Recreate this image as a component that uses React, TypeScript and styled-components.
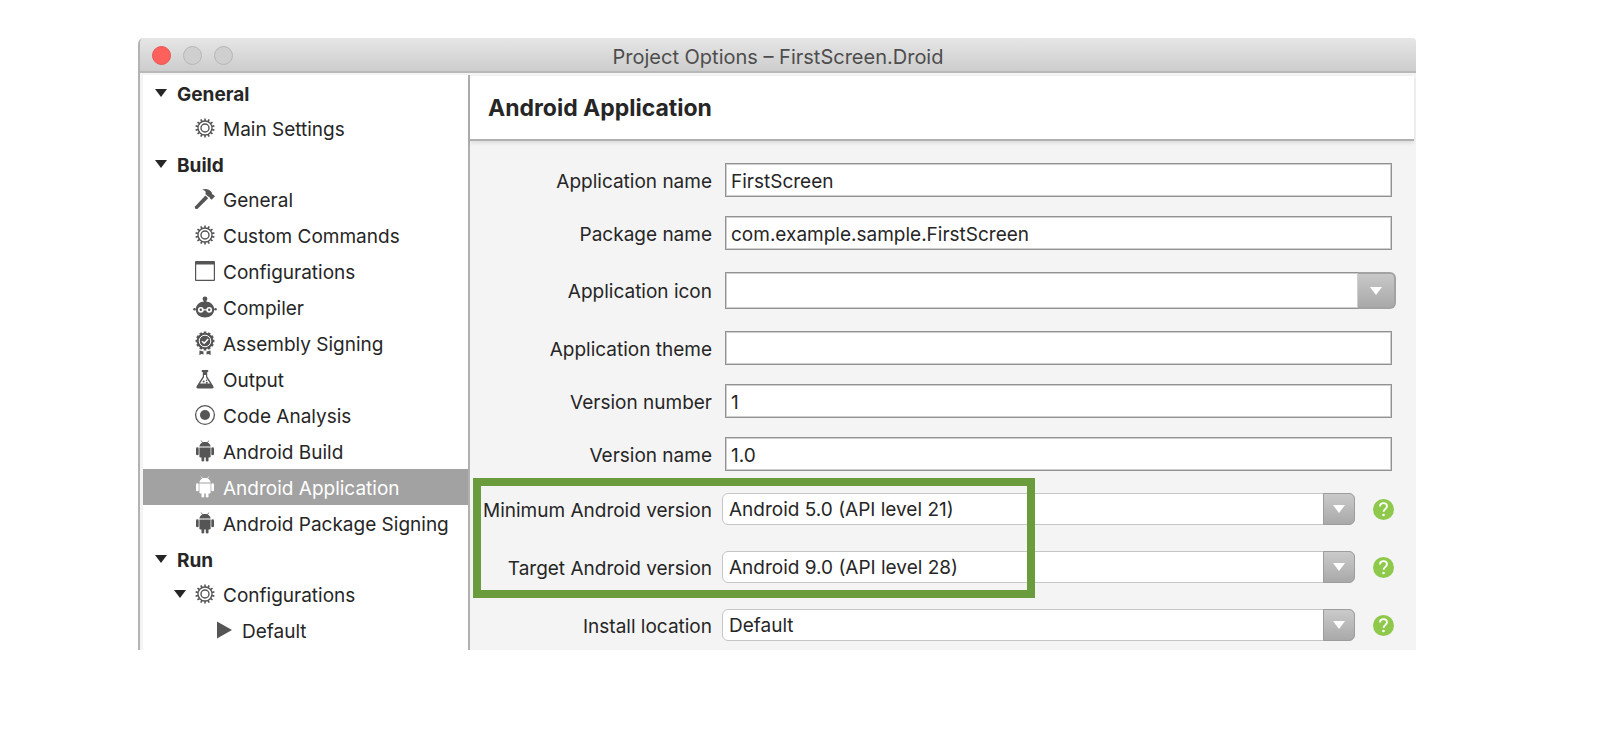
import React from 'react';
import styled, { createGlobalStyle, css } from 'styled-components';

const Global = createGlobalStyle`
  * { box-sizing: border-box; }
  body {
    margin: 0;
    background: #fff;
    color: #262626;
    font-family: Inter, "Liberation Sans", sans-serif;
    font-size: 19px;
    line-height: 24px;
  }
`;

const Page = styled.main`
  padding: 38px 184px 38px 138px;
`;

const Window = styled.section`
  overflow: hidden;
  border-left: 2px solid #b3b3b3;
  border-top-left-radius: 6px;
  border-top-right-radius: 4px;
  background: #f4f4f4;
`;

const TitleBar = styled.header`
  position: relative;
  display: flex;
  align-items: center;
  justify-content: center;
  height: 35px;
  padding-top: 2px;
  border-bottom: 2px solid #b8b8b8;
  background: linear-gradient(#e6e6e6, #cdcdcd);
`;

const Title = styled.h1`
  margin: 0;
  padding-top: 2px;
  color: #4d4d4d;
  font-size: 20px;
  font-weight: 400;
`;

const Lights = styled.div`
  position: absolute;
  left: 12px;
  display: flex;
  gap: 12px;
`;

const Light = styled.button<{ $close?: boolean }>`
  width: 19px;
  height: 19px;
  padding: 0;
  border: 1px solid ${(p) => (p.$close ? '#e9544f' : '#b7b7b7')};
  border-radius: 50%;
  background: ${(p) => (p.$close ? '#fe605c' : '#cfcfcf')};
`;

const Body = styled.div`
  display: grid;
  grid-template-columns: 330px minmax(0, 1fr);
  padding-top: 3px;
`;

const Sidebar = styled.nav`
  margin-left: 3px;
  margin-top: -1px;
  padding-bottom: 2px;
  border-right: 2px solid #b0b0b0;
  background: #fff;
`;

const GroupRow = styled.button`
  display: flex;
  align-items: center;
  gap: 10px;
  width: 100%;
  height: 35px;
  padding: 0 0 0 12px;
  border: 0;
  background: none;
  color: inherit;
  font: inherit;
  font-weight: 700;
`;

const ItemRow = styled.a<{ $depth?: number; $selected?: boolean }>`
  display: flex;
  align-items: center;
  gap: 6px;
  height: 36px;
  padding-left: ${(p) => (p.$depth === 2 ? 69 : 31)}px;
  background: ${(p) => (p.$selected ? '#a2a2a2' : 'transparent')};
  color: ${(p) => (p.$selected ? '#fff' : '#262626')};
  text-decoration: none;
  white-space: nowrap;
`;

const Caption = styled.span`
  padding-top: 4px;
`;

const Twisty = styled.span`
  display: flex;
  width: 13px;
`;

const Glyph = styled.svg<{ $selected?: boolean }>`
  flex: none;
  width: 24px;
  height: 24px;
  color: ${(p) => (p.$selected ? '#fff' : '#555')};
`;

const Pane = styled.section`
  min-width: 0;
`;

const PaneHeader = styled.header`
  margin-right: 2px;
  padding: 19px 18px 18px;
  border-bottom: 2px solid #b0b0b0;
  background: #fff;
  box-shadow: 0 2px 4px rgba(0, 0, 0, 0.1);
`;

const PaneTitle = styled.h2`
  margin: 0;
  font-size: 23px;
  line-height: 26px;
  font-weight: 700;
`;

const Form = styled.form`
  display: flex;
  flex-direction: column;
  gap: 22px;
  padding: 22px 20px 9px 0;
`;

const FieldGroup = styled.div<{ $gap: number }>`
  position: relative;
  display: flex;
  flex-direction: column;
  gap: ${(p) => p.$gap}px;
`;

const Field = styled.div<{ $kind?: 'text' | 'combo' | 'select' }>`
  display: grid;
  grid-template-columns: 242px minmax(0, 1fr) auto;
  align-items: center;
  column-gap: ${(p) => (p.$kind === 'select' ? 10 : 13)}px;
  padding-right: ${(p) => (p.$kind === 'combo' ? 0 : p.$kind === 'select' ? 2 : 4)}px;
  ${(p) => p.$kind !== 'select' && css`grid-template-columns: 242px minmax(0, 1fr);`}
`;

const Label = styled.label`
  padding-top: 3px;
  text-align: right;
  white-space: nowrap;
`;

const TextBox = styled.input`
  width: 100%;
  height: 34px;
  padding: 2px 5px 0;
  border: 1px solid #929292;
  border-radius: 0;
  background: #fff;
  box-shadow: inset 0 0 0 1px #cfcfcf;
  color: inherit;
  font: inherit;
  outline: none;
`;

const Combo = styled.div`
  display: flex;
  height: 37px;
`;

const ComboText = styled(TextBox)`
  flex: 1;
  height: 37px;
  border-right: 0;
`;

const ComboButton = styled.button`
  display: flex;
  align-items: center;
  justify-content: center;
  width: 38px;
  padding: 0;
  border: 2px solid #a3a3a3;
  border-left: 0;
  border-radius: 0 6px 6px 0;
  background: linear-gradient(#c8c8c8, #a9a9a9);
`;

const SelectWrap = styled.div`
  position: relative;
  display: flex;
`;

const Select = styled.select`
  appearance: none;
  width: 100%;
  height: 32px;
  padding: 2px 40px 0 6px;
  border: 1px solid #c6c6c6;
  border-radius: 6px;
  background: #fff;
  color: inherit;
  font: inherit;
  outline: none;
`;

const SelectArrow = styled.span`
  position: absolute;
  top: 0;
  right: 0;
  display: flex;
  align-items: center;
  justify-content: center;
  width: 32px;
  height: 100%;
  border: 1px solid #9d9d9d;
  border-radius: 0 6px 6px 0;
  background: linear-gradient(#cacaca, #a9a9a9);
  pointer-events: none;
`;

const Help = styled.button`
  display: flex;
  align-items: center;
  justify-content: center;
  width: 21px;
  height: 21px;
  margin-left: 8px;
  padding: 0;
  border: 0;
  border-radius: 50%;
  background: #8fc94c;
`;

const Highlight = styled.div`
  position: absolute;
  top: -15px;
  left: 3px;
  width: 562px;
  height: 120px;
  border: 8px solid #6a9b3c;
  pointer-events: none;
`;

const Down = ({ color = '#262626' }: { color?: string }) => (
  <svg width="12" height="8" viewBox="0 0 12 8" aria-hidden="true">
    <path d="M0 0h12L6 8z" fill={color} />
  </svg>
);

const teeth = (count: number, inner: number, outer: number, cx: number, cy: number) =>
  Array.from({ length: count }, (_, i) => {
    const a = (i * 2 * Math.PI) / count;
    const s = Math.sin(a);
    const c = Math.cos(a);
    return `M${(cx + s * inner).toFixed(2)} ${(cy - c * inner).toFixed(2)}L${(cx + s * outer).toFixed(2)} ${(cy - c * outer).toFixed(2)}`;
  }).join('');

const glyphs = {
  gear: (
    <g fill="none" stroke="currentColor">
      <circle cx="12" cy="12" r="7" strokeWidth="1.3" />
      <circle cx="12" cy="12" r="4" strokeWidth="1.4" />
      <path d={teeth(14, 7, 9.6, 12, 12)} strokeWidth="1.6" />
    </g>
  ),
  hammer: (
    <g fill="currentColor">
      <path d="M2 19.400 12.400 8.600l2.800 2.600L4.600 21.800c-1.800.8-3.400-.8-2.600-2.400z" />
      <path d="M9.200 2.600c3-1.200 6.200-.7 8.400 1.500l1.200 1.300.2 1.700 1.300.6 1.700 1.500-3.400 3.600-1.700-1.600-.4-1.300-1.400-.3-2.700-2.600.4-2c-.8-1.200-2-1.900-3.600-2.400z" />
    </g>
  ),
  window: (
    <path fill="currentColor" fillRule="evenodd" d="M3 2h18a1 1 0 0 1 1 1v18a1 1 0 0 1-1 1H3a1 1 0 0 1-1-1V3a1 1 0 0 1 1-1zm.2 3.400v15.400h17.600V5.400z" />
  ),
  robot: (
    <g fill="currentColor">
      <circle cx="12" cy="3.800" r="2.400" />
      <path d="M10.700 4h2.600v5h-2.600z" />
      <path d="M12 6.600c5.400 0 9.200 3.400 9.200 8 0 5-4.200 8-9.200 8s-9.200-3-9.200-8c0-4.600 3.800-8 9.200-8z" />
      <circle cx="1.500" cy="14.300" r="1.300" />
      <circle cx="22.500" cy="14.300" r="1.300" />
      <g fill="#fff">
        <circle cx="7.800" cy="14.800" r="2.900" />
        <circle cx="16.200" cy="14.800" r="2.900" />
        <path d="M10 14.200h4v1.200h-4z" />
      </g>
      <circle cx="7.800" cy="14.800" r="1.200" />
      <circle cx="16.200" cy="14.800" r="1.200" />
    </g>
  ),
  rosette: (
    <g fill="currentColor">
      <circle cx="12" cy="10" r="8.300" />
      <path d={teeth(12, 7, 9.4, 12, 10)} stroke="currentColor" strokeWidth="2.6" />
      <circle cx="12" cy="10" r="5.800" fill="none" stroke="#fff" strokeWidth="1" />
      <path d="m9 10.200 2.200 2.100 4-4.400" fill="none" stroke="#fff" strokeWidth="1.5" />
      <path d="m6.500 19.500 4 1v3l-1.700-.6-2.500 1zM17.500 19.500l-4 1v3l1.700-.6 2.500 1z" />
    </g>
  ),
  flask: (
    <g>
      <path fill="currentColor" d="M8.800 3h6.400v2h-1v4.600l6 9.400c.9 1.300.3 2.500-1.200 2.500H5c-1.500 0-2.100-1.200-1.200-2.500l6-9.400V5h-1z" />
      <path fill="#fff" d="M11 8h2v2.200l4 6.300H7l4-6.300z" />
      <g fill="currentColor">
        <circle cx="10.600" cy="14.500" r="1" />
        <circle cx="13.600" cy="13.200" r=".8" />
        <circle cx="13.800" cy="15.800" r="1" />
      </g>
    </g>
  ),
  target: (
    <g>
      <circle cx="12" cy="12" r="9.400" fill="none" stroke="currentColor" strokeWidth="1.3" />
      <circle cx="12" cy="12" r="5" fill="currentColor" />
    </g>
  ),
  android: (
    <g fill="currentColor">
      <path d="M6.400 7.600C6.600 4.800 9 2.900 12 2.900s5.400 1.900 5.600 4.700z" />
      <path d="m8.200 1.600 1.500 2.300M15.800 1.600l-1.500 2.300" stroke="currentColor" strokeWidth=".8" />
      <path d="M6.400 8.500h11.200v8.700a1.400 1.400 0 0 1-1.400 1.400H7.800a1.400 1.400 0 0 1-1.400-1.400z" />
      <rect x="3" y="8.300" width="2.700" height="8" rx="1.300" />
      <rect x="18.300" y="8.300" width="2.700" height="8" rx="1.300" />
      <rect x="8.500" y="16" width="2.700" height="6.600" rx="1.300" />
      <rect x="12.800" y="16" width="2.700" height="6.600" rx="1.300" />
    </g>
  ),
  play: <path fill="currentColor" d="M5 3.500v17l15-8.500z" />,
};

type GlyphName = keyof typeof glyphs;

const Item = ({ icon, children, depth, selected, open }: {
  icon: GlyphName; children: string; depth?: number; selected?: boolean; open?: boolean;
}) => (
  <ItemRow href="#" $depth={depth} $selected={selected} aria-current={selected ? 'page' : undefined}>
    {depth !== 2 && <Twisty>{open && <Down />}</Twisty>}
    <Glyph viewBox="0 0 24 24" $selected={selected} aria-hidden="true">{glyphs[icon]}</Glyph>
    <Caption>{children}</Caption>
  </ItemRow>
);

const Group = ({ children }: { children: string }) => (
  <GroupRow type="button"><Down /><Caption>{children}</Caption></GroupRow>
);

const TextField = ({ id, label, value = '' }: { id: string; label: string; value?: string }) => (
  <Field>
    <Label htmlFor={id}>{label}</Label>
    <TextBox id={id} defaultValue={value} />
  </Field>
);

const SelectField = ({ id, label, value }: { id: string; label: string; value: string }) => (
  <Field $kind="select">
    <Label htmlFor={id}>{label}</Label>
    <SelectWrap>
      <Select id={id}><option>{value}</option></Select>
      <SelectArrow><Down color="#fff" /></SelectArrow>
    </SelectWrap>
    <Help type="button" aria-label={`Help for ${label}`}>
      <svg width="21" height="21" viewBox="0 0 21 21" aria-hidden="true">
        <path d="M7 7.400c0-2 1.500-3.200 3.500-3.200s3.500 1.200 3.500 3.100c0 2.500-3.400 2.700-3.400 5.500" fill="none" stroke="#fff" strokeWidth="1.8" />
        <circle cx="10.500" cy="16" r="1.300" fill="#fff" />
      </svg>
    </Help>
  </Field>
);

export default function App() {
  return (
    <Page>
      <Global />
      <Window>
        <TitleBar>
          <Lights>
            <Light $close type="button" aria-label="Close" />
            <Light type="button" aria-label="Minimize" />
            <Light type="button" aria-label="Zoom" />
          </Lights>
          <Title>Project Options – FirstScreen.Droid</Title>
        </TitleBar>
        <Body>
          <Sidebar>
            <Group>General</Group>
            <Item icon="gear">Main Settings</Item>
            <Group>Build</Group>
            <Item icon="hammer">General</Item>
            <Item icon="gear">Custom Commands</Item>
            <Item icon="window">Configurations</Item>
            <Item icon="robot">Compiler</Item>
            <Item icon="rosette">Assembly Signing</Item>
            <Item icon="flask">Output</Item>
            <Item icon="target">Code Analysis</Item>
            <Item icon="android">Android Build</Item>
            <Item icon="android" selected>Android Application</Item>
            <Item icon="android">Android Package Signing</Item>
            <Group>Run</Group>
            <Item icon="gear" open>Configurations</Item>
            <Item icon="play" depth={2}>Default</Item>
          </Sidebar>
          <Pane>
            <PaneHeader><PaneTitle>Android Application</PaneTitle></PaneHeader>
            <Form>
              <FieldGroup $gap={19}>
                <TextField id="app-name" label="Application name" value="FirstScreen" />
                <TextField id="package" label="Package name" value="com.example.sample.FirstScreen" />
              </FieldGroup>
              <Field $kind="combo">
                <Label htmlFor="app-icon">Application icon</Label>
                <Combo>
                  <ComboText id="app-icon" />
                  <ComboButton type="button" aria-label="Choose application icon"><Down color="#fff" /></ComboButton>
                </Combo>
              </Field>
              <FieldGroup $gap={19}>
                <TextField id="theme" label="Application theme" />
                <TextField id="version-number" label="Version number" value="1" />
                <TextField id="version-name" label="Version name" value="1.0" />
              </FieldGroup>
              <FieldGroup $gap={26}>
                <SelectField id="min-version" label="Minimum Android version" value="Android 5.0 (API level 21)" />
                <SelectField id="target-version" label="Target Android version" value="Android 9.0 (API level 28)" />
                <SelectField id="location" label="Install location" value="Default" />
                <Highlight />
              </FieldGroup>
            </Form>
          </Pane>
        </Body>
      </Window>
    </Page>
  );
}
